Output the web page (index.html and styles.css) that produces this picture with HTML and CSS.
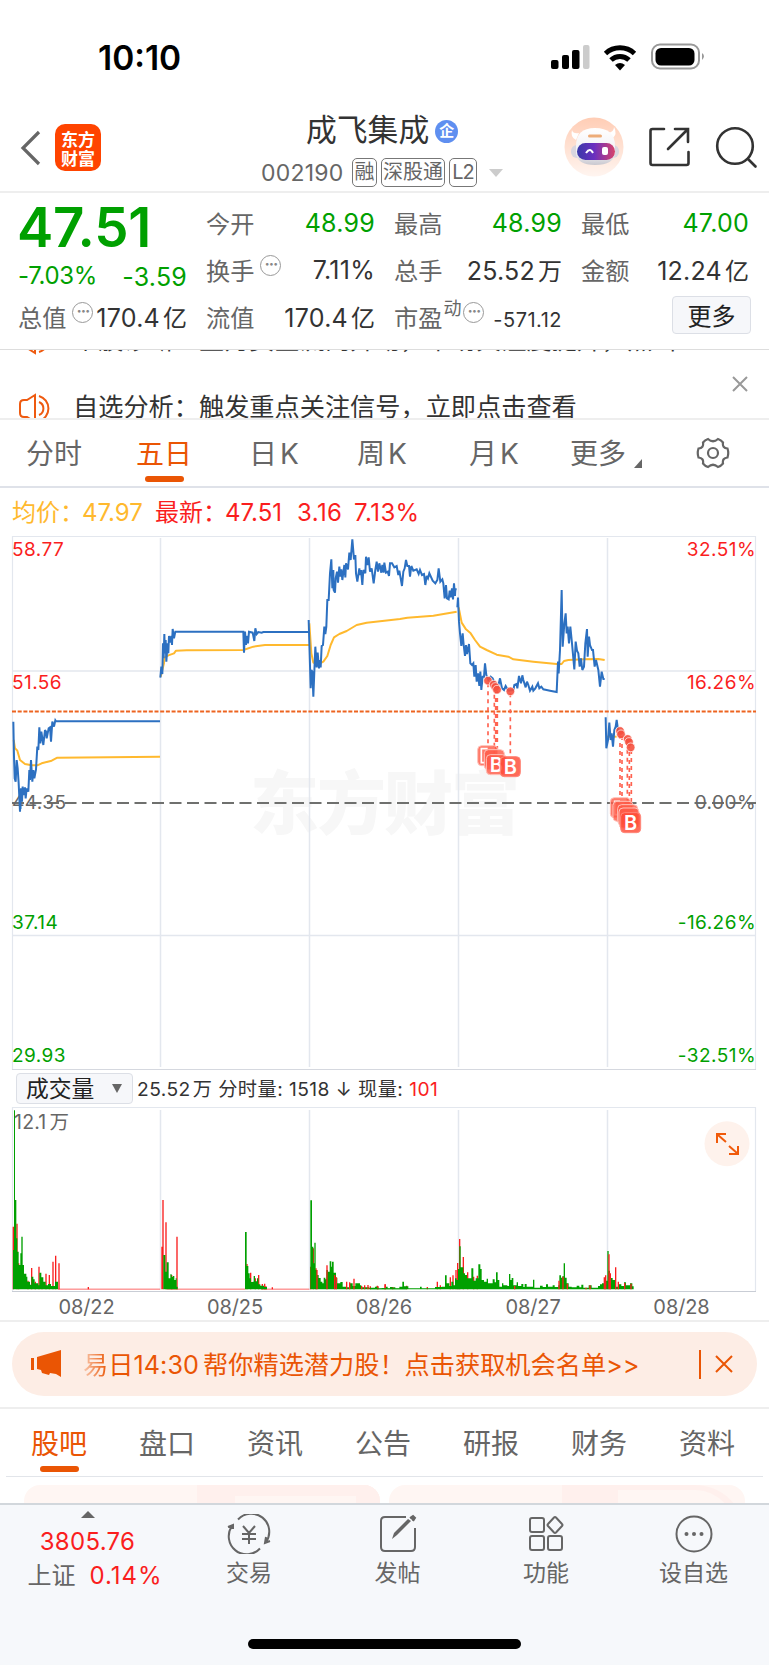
FILE: index.html
```html
<!DOCTYPE html>
<html lang="zh-CN">
<head>
<meta charset="utf-8">
<title>成飞集成 002190</title>
<link rel="stylesheet" href="styles.css">
</head>
<body>
<div class="screen">
  <div class="status">
    <span class="clock">10:10</span>
    <svg class="signals" width="156" height="40" viewBox="0 0 156 40">
      <g fill="#000"><rect x="1" y="23" width="7.5" height="9" rx="2"/><rect x="12" y="18" width="7" height="14" rx="2"/><rect x="22" y="13" width="7.5" height="19" rx="2"/></g>
      <rect x="33" y="8" width="6.5" height="24" rx="2" fill="#ccc"/>
      <g fill="none" stroke="#000" stroke-width="5"><path d="M55.500 16.500a21.500 21.500 0 0 1 29 0"/><path d="M61 23a13 13 0 0 1 18 0"/></g>
      <path d="M65 28a8 8 0 0 1 10 0l-5 5.500z"/>
      <rect x="102" y="7.500" width="47" height="24" rx="8" fill="none" stroke="#999" stroke-width="2"/>
      <rect x="105.500" y="11" width="39" height="17.500" rx="5.500"/>
      <path d="M152 16q4 3 0 7z" fill="#999"/>
    </svg>
  </div>

  <header class="head">
    <svg class="back" width="22" height="36" viewBox="0 0 22 36"><path d="M20 2L4 18L20 34" fill="none" stroke="#666" stroke-width="3.200"/></svg>
    <div class="logo"><span>东方</span><span>财富</span></div>
    <div class="title">
      <div class="name">成飞集成<i class="ent">企</i></div>
      <div class="code"><span class="num">002190</span><b>融</b><b class="wide">深股通</b><b class="l2">L2</b><svg width="14" height="8"><path d="M0 0h14l-7 8z" fill="#ccc"/></svg></div>
    </div>
    <svg class="robot" width="60" height="60" viewBox="0 0 60 60">
      <defs>
        <linearGradient id="halo" x2="0" y2="1"><stop offset="0" stop-color="#ffcdb5"/><stop offset="1" stop-color="#fff5f0"/></linearGradient>
        <linearGradient id="visor"><stop offset="0" stop-color="#3a3aa8"/><stop offset=".45" stop-color="#6a2fc0"/><stop offset="1" stop-color="#d8436a"/></linearGradient>
        <linearGradient id="shell" x2="0" y2="1"><stop offset="0" stop-color="#fff"/><stop offset=".7" stop-color="#f0eff3"/><stop offset="1" stop-color="#c9c8cf"/></linearGradient>
      </defs>
      <circle cx="30" cy="30" r="29.500" fill="url(#halo)"/>
      <path d="M8 13q1 4 7 3l-3 7q-6-3-4-10zM50 10q0 5-6 6l4 6q6-5 2-12z" fill="#fff"/>
      <rect x="7" y="28" width="48" height="13" rx="6" fill="#d8d6df"/>
      <path d="M12 29Q12 11 31 11Q51 11 51 29V36Q50 48 31 48Q13 48 12 36Z" fill="url(#shell)"/>
      <rect x="13" y="26" width="38" height="17" rx="8.500" fill="url(#visor)"/>
      <path d="M22 36q4-6 7 0" fill="none" stroke="#fff" stroke-width="2"/><rect x="38" y="30" width="6" height="8" rx="2" fill="#fff"/>
      <rect x="24" y="17.500" width="14" height="3" rx="1.500" fill="#edac78"/>
    </svg>
    <svg class="share" width="42" height="42" viewBox="0 0 42 42" fill="none" stroke="#333" stroke-width="2.600" stroke-linecap="round"><path d="M16 3H4.500q-2 0-2 2v32q0 2 2 2h34q2 0 2-2V26M27 3h13v13M39.500 3.500L20 23"/></svg>
    <svg class="search" width="44" height="44" viewBox="0 0 44 44" fill="none" stroke="#333" stroke-width="2.600" stroke-linecap="round"><circle cx="20" cy="20" r="17.800"/><path d="M33 33l7.500 7.500"/></svg>
  </header>

  <section class="quote">
    <div class="main">
      <div class="price">47.51</div>
      <div class="change"><span>-7.03%</span><span class="diff">-3.59</span></div>
      <div class="cell"><span class="lab">总值</span><i class="tip">···</i><span class="val">170.4<em>亿</em></span></div>
    </div>
    <div class="grid">
      <div class="cell"><span class="lab">今开</span><span class="val green">48.99</span></div>
      <div class="cell"><span class="lab">最高</span><span class="val green">48.99</span></div>
      <div class="cell"><span class="lab">最低</span><span class="val green">47.00</span></div>
      <div class="cell"><span class="lab">换手</span><i class="tip">···</i><span class="val">7.11%</span></div>
      <div class="cell"><span class="lab">总手</span><span class="val">25.52<em>万</em></span></div>
      <div class="cell"><span class="lab">金额</span><span class="val">12.24<em>亿</em></span></div>
      <div class="cell"><span class="lab">流值</span><span class="val">170.4<em>亿</em></span></div>
      <div class="cell"><span class="lab">市盈</span><sup>动</sup><i class="tip near">···</i><span class="val small">-571.12</span></div>
      <div class="cell"><button class="more">更多</button></div>
    </div>
  </section>

  <section class="ticker">
    <div class="lines">
      <div class="line gone"><svg class="horn" width="36" height="32" viewBox="0 0 36 32"><use href="#horn"/></svg><span>个股诊断：主力资金流向异动，市场关注度提升，点击</span></div>
      <div class="line"><svg class="horn" width="36" height="32" viewBox="0 0 36 32"><g id="horn" fill="none" stroke="#ee5a10" stroke-width="2"><path d="M16 2L8 7H5Q1 7 1 11v9q0 4 4 4h3l8 5zM20 9a7 7 0 0 1 0 13M20 3a13 13 0 0 1 0 25"/></g></svg><span>自选分析：触发重点关注信号，立即点击查看</span></div>
    </div>
    <svg class="close" width="16" height="16"><path d="M1 1l14 14M15 1L1 15" stroke="#999" stroke-width="2"/></svg>
  </section>

  <nav class="periods">
    <span>分时</span><span class="on">五日</span><span>日<u>K</u></span><span>周<u>K</u></span><span>月<u>K</u></span><span class="drop">更多<svg width="8" height="9"><path d="M8 0v9H0z" fill="#666"/></svg></span>
    <svg class="gear" width="34" height="32" viewBox="-17 -16 34 32" fill="none" stroke="#666" stroke-width="2.200"><path d="M-5-14Q0-9.500 5-14Q8-13 10-10.500Q9-5 14.500-4.500Q16 0 14.500 4.500Q9 5 10 10.500Q8 13 5 14Q0 9.500-5 14Q-8 13-10 10.500Q-9 5-14.500 4.500Q-16 0-14.500-4.500Q-9-5-10-10.500Q-8-13-5-14Z"/><circle r="5"/></svg>
  </nav>

  <div class="legend"><span class="avg">均价：<b>47.97</b></span><span>最新：<b>47.51</b></span><b>3.16</b><b>7.13%</b></div>

  <svg class="chart" width="769" height="540" viewBox="0 532 769 540">
    <text x="250" y="829" class="mark" textLength="270">东方财富</text>
    <path class="rule" d="M160.500 538V1067M309.500 538V1067M458.500 538V1067M607.500 538V1067M12 671H756M12 935.500H756"/>
    <path class="rule frame" d="M12.500 536.500H755.500V1069.500H12.500Z"/>
    <path d="M12 1069.500H756" stroke="#d5d8df" fill="none"/>
    <path d="M12 803H756" stroke="#6f706e" stroke-width="2" stroke-dasharray="12 5.500" fill="none"/>
    <g class="axis red"><text x="12" y="555.500">58.77</text><text x="12" y="689">51.56</text><text x="756" y="555.500" class="end">32.51%</text><text x="756" y="689" class="end">16.26%</text></g>
    <g class="axis gray"><text x="12" y="809">44.35</text><text x="756" y="809" class="end">0.00%</text></g>
    <g class="axis grn"><text x="12" y="929">37.14</text><text x="12" y="1062">29.93</text><text x="756" y="929" class="end">-16.26%</text><text x="756" y="1062" class="end">-32.51%</text></g>
    <path d="M12 711.500H756" stroke="#ed6420" stroke-width="2" stroke-dasharray="4 1.700" fill="none"/>
    <g transform="translate(0 530) scale(.33333)">
      <polyline class="mean" points="41,630 45,655 52,662 60,690 75,702 95,706 112,706 125,700 155,692 172,683 480,680"/>
      <polyline class="mean" points="482,440 492,400 493,383 505,376 522,370 528,362 560,361 730,360 760,350 795,345 927,345"/>
      <polyline class="px" points="40,575 42,680 44,745 47,755 50,690 53,715 56,760 60,845 63,775 66,815 68,770 71,795 75,772 77,805 80,775 85,785 88,720 90,750 93,690 97,755 100,720 103,745 108,718 112,650 115,660 118,592 121,640 124,605 130,645 135,600 138,605 140,625 146,595 150,592 153,635 157,575 162,590 166,571 168,574 480,574"/>
      <polyline class="px" points="481,443 484,410 487,432 489,340 491,385 493,312 495,370 497,330 499,395 503,340 505,370 507,318 511,338 514,318 516,345 518,297 522,325 526,305 730,305 732,368 735,305 738,345 740,318 744,340 747,305 758,308 763,333 766,295 770,312 775,306 785,308 790,306 927,306"/>
    </g>
    <g transform="translate(300 530) scale(.33333)">
      <polyline class="mean" points="28,280 34,370 40,398 60,400 70,395 82,378 92,345 102,322 118,312 140,303 170,285 200,278 300,267 322,263 400,257 470,245"/>
      <polyline class="mean" points="476,232 485,278 498,298 512,310 525,330 540,350 560,360 590,374 625,380 640,388 700,395 770,402 785,402 792,393 805,390 850,388 895,387 914,390"/>
      <polyline class="px" points="26,270 32,475 34,420 37,425 40,500 46,350 50,412 53,368 57,415 60,390 62,412 65,348 69,345 73,290 76,312 79,290 82,210 86,210 90,130 94,88 97,175 100,120 101,180 105,188 107,145 111,125 114,158 118,110 121,140 124,118 127,150 133,105 136,142 138,100 144,118 148,68 152,90 157,28 162,88 166,75 168,130 172,155 178,115 180,135 183,120 187,165 190,120 196,130 198,80 202,105 206,82 210,125 215,115 221,160 226,120 230,95 234,125 238,100 244,128 247,105 251,128 253,98 258,128 263,125 267,138 270,100 276,100 283,112 290,108 295,135 298,122 306,168 310,125 314,115 318,90 322,108 327,108 330,140 334,108 340,122 350,118 356,132 360,120 366,135 372,132 376,165 380,138 384,145 388,130 398,152 406,160 412,150 416,115 421,155 427,148 430,160 434,205 438,165 441,205 446,208 449,182 452,202 456,175 459,208 462,160 465,198 466,178 470,178"/>
      <polyline class="px" points="472,232 474,203 477,275 480,310 484,348 488,310 491,345 495,378 498,345 501,372 507,342 511,400 516,405 520,400 523,440 527,405 530,455 534,430 538,468 541,425 544,480 548,440 552,440 555,400 559,435 565,450 572,440 578,445 585,462 592,480 600,445 606,475 612,480 617,468 625,482 640,480 643,465 650,462 652,475 657,438 663,460 667,436 670,450 677,472 681,455 685,465 690,482 697,470 700,482 706,475 714,460 718,475 724,470 730,478 750,482 770,486 774,395 776,430 780,360 785,180 788,350 793,280 797,250 800,310 803,290 807,340 811,290 816,340 823,418 827,335 831,362 835,370 839,410 843,385 847,420 852,410 856,340 861,297 863,380 867,320 870,345 876,360 879,360 884,410 888,390 895,420 900,470 905,425 910,447 914,447"/>
    </g>
    <g transform="translate(460 640) scale(.33333)">
      <path class="mean" d="M440 290H470"/>
      <polyline class="px" points="437,232 439,325 444,300 448,248 452,300 455,280 459,320 463,270 467,260 470,240 474,270 478,272"/>
      <path d="M84 130V320M103 140V340M107 150V345M112 150V350M151 160V350M480 285V470M486 288V475M502 305V490M508 312V500M514 330V515" stroke="#ff6250" stroke-width="5" stroke-dasharray="12 12" fill="none"/>
      <g class="dots"><circle cx="84" cy="122" r="13"/><circle cx="101" cy="134" r="13"/><circle cx="106" cy="141" r="13"/><circle cx="111" cy="149" r="13"/><circle cx="151" cy="154" r="13"/><circle cx="480" cy="273" r="13"/><circle cx="483" cy="283" r="13"/><circle cx="503" cy="297" r="13"/><circle cx="507" cy="306" r="13"/><circle cx="512" cy="322" r="13"/></g>
      <g class="buys">
        <rect x="53" y="317" width="60" height="60" rx="12"/><path d="M83 326H64V368H74" fill="none" stroke="#fff" stroke-width="5"/><rect x="73" y="329" width="60" height="60" rx="12"/><rect x="79" y="344" width="60" height="60" rx="12"/><text x="109" y="396">B</text><rect class="front" x="121" y="350" width="60" height="60" rx="12"/><text x="151" y="402">B</text>
        <rect x="451" y="473" width="60" height="60" rx="12"/><path d="M480 484H464V524H472" fill="none" stroke="#fff" stroke-width="5"/><rect x="459" y="484" width="60" height="60" rx="12"/><rect x="473" y="494" width="60" height="60" rx="12"/><rect x="477" y="504" width="60" height="60" rx="12"/><rect class="front" x="482" y="518" width="60" height="60" rx="12"/><text x="512" y="570">B</text>
      </g>
    </g>
  </svg>

  <div class="volbar"><button>成交量<svg width="10" height="9"><path d="M0 0h10L5 9z" fill="#666"/></svg></button><span class="voltext">25.52<em class="unit">万</em> <em>分时量</em>: 1518 ↓ <em>现量</em>: <b>101</b></span></div>

  <svg class="volume" width="769" height="215" viewBox="0 1105 769 215">
    <path class="rule" d="M160.500 1110V1290M309.500 1110V1290M458.500 1110V1290M607.500 1110V1290"/>
    <path class="rule frame" d="M12.500 1291.500V1107.500H755.500V1291"/>
    <path d="M12 1291.500H756" stroke="#c9cdd5" fill="none"/>
    <text x="14" y="1129" class="top">12.1<tspan dx="3">万</tspan></text>
    <g transform="translate(0 1050) scale(.33333)" fill="none" stroke-width="4">
      <path class="up" d="M40 718V530M51 718V521M56 718V640M84 718V692M95 718V654M106 718V695M117 718V650M126 718V690M138 718V671M148 718V675M159 718V635M167 718V617M177 718V640M265 718V711"/>
      <path class="bars" d="M39 718V600H42V181H45V450H49V565H52V605H56V645H61V610H64V560H68V645H72V671H79V680H82V695H90V704H94V680H100V688H104V700H115V706H118V668H124V682H130V695H137V706H144V702H153V708H165V695H174V718Z"/>
      <path class="up" stroke-width="2" d="M174 717.500H480M500 717.500H736M783 717.500H928"/>
      <path class="up" d="M486 718V590M489 718V450M498 718V517M531 718V560M515 718V675"/>
      <path class="bars" d="M490 718V615H496V665H500V637H506V685H511V673H515V680H519V678H523V690H527V685H530V710H533V718Z"/>
      <path class="up" d="M741 718V642M752 718V668M766 718V685M776 718V675M787 718V702M794 718V701M798 718V709M817 718V712M932 718V650M940 718V595M948 718V655"/>
      <path class="bars" d="M735 718V546H740V648H745V670H749V685H753V696H758V695H761V678H765V694H771V685H775V703H781V707H792V711H801V718ZM931 718V451H936V590H940V640H943V578H947V660H951V675H956V684H962V695H967V700H971V683H976V688H979V660H984V665H989V634H994V650H996V635H1001V668H1008V683H1012V700H1021V696H1028V710H1040V712H1050V700H1058V708H1066V700H1080V706H1084V712H1108V714H1125V710H1135V716H1145V714H1155V710H1163V716H1178V712H1186V716H1220V718Z"/>
      <path class="up" d="M951 718V660M981 718V646M1004 718V675M1009 718V682M1040 718V695M1049 718V697M1062 718V686M1085 718V708M1094 718V706M1104 718V705M1111 718V709M1134 718V709M1156 718V703"/>
    </g>
    <g transform="translate(370 1050) scale(.33333)" fill="none" stroke-width="4">
      <path class="up" d="M22 718V707M45 718V703M68 718V711M110 718V707M172 718V711M202 718V695M211 718V706M241 718V682M249 718V676M258 718V660M263 718V639M269 718V567M280 718V621M293 718V667M311 718V680M322 718V677"/>
      <path class="bars" d="M0 718V713H18V710H22V715H60V711H68V715H88V710H97V695H102V709H115V715H150V710H155V715H195V711H215V710H225V676H230V700H238V708H244V695H250V706H255V685H260V690H264V657H268V589H272V652H280V670H285V675H291V685H304V655H310V692H317V685H325V643H331V657H335V690H342V695H350V686H354V700H368V688H374V697H378V667H383V690H388V710H396V700H400V706H412V708H417V672H421V690H425V684H430V706H440V697H444V708H454V702H460V711H464V702H470V710H489V689H493V713H510V707H518V711H528V703H534V710H548V706H554V711H565V706H568V676H573V683H577V679H581V640H585V683H590V700H596V710H605V712H620V707H628V712H634V704H640V713H656V706H665V713H684V708H690V703H696V700H704V692H712V603H716V662H720V684H728V690H736V710H746V703H754V708H762V697H768V706H780V700H787V709H791V718Z"/>
      <path class="up" d="M434 718V708M567 718V692M579 718V680M592 718V701M648 718V713M660 718V706M703 718V682M707 718V676M717 718V613M721 718V670M737 718V652M745 718V695M764 718V699M783 718V701"/>
    </g>
    <circle cx="727" cy="1143.700" r="22.500" fill="#fef2ec"/>
    <path d="M717 1143V1134H726M718 1135L726 1142M738 1146V1154H729M737 1153L729 1146" fill="none" stroke="#f05a0a" stroke-width="2"/>
    <g class="dates"><text x="86.500" y="1313.500">08/22</text><text x="235" y="1313.500">08/25</text><text x="384" y="1313.500">08/26</text><text x="533" y="1313.500">08/27</text><text x="681.500" y="1313.500">08/28</text></g>
  </svg>

  <section class="promo">
    <div class="pill">
      <svg width="32" height="28" viewBox="0 0 32 28" fill="#ea5504"><path d="M0 8h3v12H0zM6 7L30 0v27l-5-3-6-1-1 2-7-2-1-3-4-1z"/></svg>
      <span class="msg"><em>易</em>日<b>14:30</b>帮你精选潜力股！点击获取机会名单<b>&gt;&gt;</b></span>
      <i class="bar"></i>
      <svg width="18" height="18"><path d="M1 1l16 16M17 1L1 17" stroke="#ea5504" stroke-width="2"/></svg>
    </div>
  </section>

  <nav class="sections"><span class="on">股吧</span><span>盘口</span><span>资讯</span><span>公告</span><span>研报</span><span>财务</span><span>资料</span></nav>
  <div class="cards"><div><i></i><i class="b"></i></div><div><i></i><i class="b round"></i></div></div>

  <footer class="dock">
    <div class="index"><svg width="14" height="7"><path d="M7 0l7 7H0z" fill="#666"/></svg><b>3805.76</b><span>上证<b>0.14%</b></span></div>
    <div class="item"><svg width="44" height="40" viewBox="-22 -20 44 40" fill="none" stroke="#666" stroke-width="2"><path d="M-11-14.500A18 18 0 0 1 17 8M11 14.500A18 18 0 0 1-17-8M-21-7l5-2 0 4M21 7l-5 2 1-6M-6-8L0-1L6-8M0-1V10M-7 0H7M-7 5H7"/></svg>交易</div>
    <div class="item"><svg width="44" height="40" viewBox="-22 -20 44 40" fill="none" stroke="#666" stroke-width="2"><path d="M8-17H-13q-4 0-4 4v26q0 4 4 4h26q4 0 4-4V-6"/><path d="M-6 5l2-6L10-15l3 2L-1 1z" fill="#666" stroke="none"/><path d="M12-16l3-2 2 2-2 3" fill="#666"/></svg>发帖</div>
    <div class="item"><svg width="44" height="40" viewBox="-22 -20 44 40" fill="none" stroke="#666" stroke-width="2"><rect x="-16" y="-16" width="14" height="14" rx="2"/><rect x="-16" y="2" width="14" height="14" rx="2"/><rect x="2" y="2" width="14" height="14" rx="2"/><path d="M8-16.500q1-1 2 0l6 6.500q1 1 0 2l-6 6.500q-1 1-2 0L2-8q-1-1 0-2z"/></svg>功能</div>
    <div class="item"><svg width="44" height="40" viewBox="-22 -20 44 40" fill="none" stroke="#666" stroke-width="2"><circle r="17.500"/><g fill="#666" stroke="none"><circle cx="-7.500" r="2"/><circle r="2"/><circle cx="7.500" r="2"/></g></svg>设自选</div>
    <div class="homebar"></div>
  </footer>
</div>
</body>
</html>
```
FILE: styles.css
```css
* { box-sizing: border-box; }
body { margin: 0; background: #fff; font-family: Inter, "Noto Sans CJK SC", sans-serif; color: #333; }
i, em { font-style: normal; }
b { font-weight: 400; }
u { text-decoration: none; }
svg { display: block; flex: none; }
.screen { width: 769px; height: 1665px; overflow: hidden; display: flex; flex-direction: column; }
.screen > * { flex: none; }

.status { height: 100px; padding: 38px 63px 0 98px; display: flex; justify-content: space-between; }
.clock { font-size: 33.500px; line-height: 40px; font-weight: 600; color: #000; letter-spacing: 0; }
.signals { margin-top: -1px; }

.head { height: 93px; border-bottom: 2px solid #eee; display: flex; padding-left: 19px; }
.back { margin-top: 30px; }
.logo { width: 46px; height: 47px; margin: 24px 0 0 14px; border-radius: 10px; background: #ff4400; color: #fff; font: 700 17px/19px "Noto Sans CJK SC", sans-serif; display: flex; flex-direction: column; align-items: center; justify-content: center; }
.title { margin-left: 160px; width: 260px; }
.name { height: 53px; margin-left: 45px; padding-top: 7px; font-size: 30.800px; line-height: 46px; display: flex; align-items: center; }
.ent { width: 23px; height: 23px; border-radius: 50%; background: #5f8ff0; color: #fff; font-size: 15px; font-weight: 700; line-height: 22px; text-align: center; margin: 3px 0 0 6px; }
.code { display: flex; align-items: center; margin-top: 5px; height: 29px; font-size: 23px; color: #666; }
.code .num { width: 91px; letter-spacing: .2px; }
.code b { width: 25px; height: 29px; border: 1.500px solid #777; border-radius: 5px; font-size: 20px; line-height: 26px; text-align: center; margin-right: 4px; display: flex; justify-content: center; }
.code .wide { width: 64px; }
.code .l2 { width: 28px; letter-spacing: -1px; margin-right: 12px; }
.robot { margin: 17px 0 0 43px; }
.share { margin: 26px 0 0 24px; }
.search { margin: 26px 0 0 25px; }

.quote { height: 157px; border-bottom: 1px solid #ddd; display: flex; padding: 6px 20px 0 18px; }
.main { width: 169px; margin-right: 19px; }
.price { font-size: 54.500px; line-height: 56px; height: 57px; font-weight: 600; color: #00a000; letter-spacing: -.2px; margin-left: -1px; }
.change { display: flex; justify-content: space-between; height: 37px; line-height: 40px; font-size: 24px; letter-spacing: -.3px; color: #00a000; }
.diff { font-size: 25px; letter-spacing: .2px; padding-top: 1px; }
.grid { flex: 1; display: grid; grid-template-columns: 169px 168px 168px; column-gap: 19px; grid-auto-rows: 47px; }
.cell { display: flex; align-items: center; height: 47px; font-size: 24.200px; }
.lab { color: #666; margin-top: -1px; }
.val { margin-left: auto; font-size: 25px; letter-spacing: .25px; white-space: nowrap; }
.val em { font-size: 24px; margin-left: 3px; letter-spacing: 0; }
.green { color: #00a000; }
.small { font-size: 20px; padding-top: 6px; letter-spacing: .5px; }
.tip { width: 21px; height: 21px; border: 1.500px solid #999; border-radius: 50%; color: #888; font-size: 16px; line-height: 17px; font-weight: 700; text-align: center; letter-spacing: -1px; margin: 0 -20px 8px 6px; flex: none; }
.tip.near { margin-left: 2px; }
.cell sup { font-size: 18px; color: #666; margin: 0 0 16px 1px; line-height: 20px; }
.more { width: 79px; height: 38px; margin: -3px -2px 0 auto; border: 1.500px solid #dcdfe6; border-radius: 4px; background: #f6f7fa; color: #222; font: 24px/30px "Noto Sans CJK SC", sans-serif; padding: 0; }

.ticker { height: 70px; border-bottom: 2px solid #eee; display: flex; justify-content: space-between; padding: 0 21px 0 19px; }
.lines { height: 68px; overflow: hidden; }
.line { display: flex; height: 36px; font-size: 25.200px; line-height: 36px; white-space: nowrap; }
.line.gone { height: 67px; margin-top: -28px; }
.line span { margin-left: 18px; }
.line .horn { margin-top: 4px; }
.line.gone .horn { margin-top: 2px; }
.close { margin-top: 26px; }

.periods { height: 68px; border-bottom: 2px solid #dfe2e9; display: flex; font-size: 28px; line-height: 68px; color: #666; padding-left: 26px; }
.periods span { width: 110px; white-space: nowrap; position: relative; flex: none; }
.periods span:nth-child(3) { margin-left: 3px; width: 108px; }
.periods span:nth-child(4) { width: 112px; }
.periods span:nth-child(5) { width: 101px; }
.periods u { margin-left: 3px; }
.periods .on, .sections .on { color: #ea5504; }
.on::after { content: ""; position: absolute; left: 9px; bottom: 4px; width: 39px; height: 6px; border-radius: 3px; background: #ea5504; }
.periods .drop { display: flex; width: 126px; }
.drop svg { margin: 39px 0 0 8px; }
.gear { margin-top: 17px; }

.legend { height: 44px; display: flex; padding-left: 12px; font-size: 24px; line-height: 49px; color: #fa1e1e; white-space: nowrap; }
.legend span { display: flex; width: 143px; }
.legend span b { margin-left: -2px; }
.legend .avg { color: #ffb92e; }
.legend > b { width: 58px; margin-left: -1px; letter-spacing: .4px; }

.rule { fill: none; stroke: #e3e7ee; stroke-width: 1.500; }
.frame { stroke-width: 1.200; }
.mark { font: 900 69px "Noto Sans CJK SC", sans-serif; fill: #f7f7f7; }
.axis { font-size: 19px; letter-spacing: .45px; }
.end { text-anchor: end; }
.red { fill: #fa1e1e; }
.gray, .top { fill: #666; }
.grn { fill: #00a000; }
.mean { fill: none; stroke: #ffb92e; stroke-width: 6; stroke-linejoin: round; }
.px { fill: none; stroke: #2c70c1; stroke-width: 6; stroke-linejoin: miter; stroke-miterlimit: 3; }
.dots circle { fill: #f5503e; fill-opacity: .9; stroke: #fff; stroke-width: 2; }
.buys rect { fill: #ff5c48; fill-opacity: .82; stroke: #ffc3bb; stroke-width: 3; }
.buys .front { stroke: #ff8678; fill: #ff4a36; }
.buys text { font-size: 60px; font-weight: 600; fill: #fff; text-anchor: middle; }

.volbar { height: 33px; display: flex; padding: 1px 0 0 16px; align-items: flex-start; }
.volbar button { width: 117px; height: 31px; border: 1px solid #dcdfe6; border-radius: 4px; background: #f6f7fa; color: #222; font: 22.800px/25px "Noto Sans CJK SC", sans-serif; padding: 0 10px 3px 9px; display: flex; justify-content: space-between; align-items: center; }
.volbar button svg { margin-top: 3px; }
.voltext { margin-left: 4px; font-size: 19.200px; line-height: 33px; letter-spacing: .45px; white-space: nowrap; }
.unit { margin-left: 2px; }
.voltext b { color: #fa1e1e; }
.top { font-size: 19.500px; letter-spacing: .2px; }
.up { stroke: #fa1e1e; }
.bars { fill: #00a000; }
.dates { font-size: 20px; fill: #666; text-anchor: middle; letter-spacing: -.1px; }

.promo { height: 89px; border-top: 2px solid #eee; border-bottom: 2px solid #eee; padding: 10px 12px 0; }
.pill { height: 64px; border-radius: 32px; background: #fdede5; display: flex; align-items: center; padding: 0 23px 0 19px; color: #ea5504; }
.msg { width: 595px; margin: -3px 0 0 20px; font-size: 25.200px; white-space: nowrap; }
.msg em { background: linear-gradient(90deg, #f9c9b0, #ea5504); -webkit-background-clip: text; background-clip: text; color: transparent; }
.msg b { margin-right: 4px; letter-spacing: .1px; }
.pill .bar { width: 1.500px; height: 29px; background: #ea5504; margin: 0 14px 0 21px; }

.sections { height: 68px; margin: 0 6px; border-bottom: 1.500px solid #e2e5ea; display: flex; padding-left: 25px; font-size: 28px; line-height: 70px; color: #666; }
.sections span { width: 108px; flex: none; position: relative; }
.cards { height: 26px; padding: 8px 24px 0; display: flex; gap: 9px; overflow: hidden; }
.cards div { width: 356px; height: 60px; border-radius: 16px; background: #fff6f3; display: flex; justify-content: flex-end; overflow: hidden; }
.cards i { width: 38px; background: #fff0ed; }
.cards .b { width: 145px; border: solid #fff0ed; border-width: 11px 24px 0 0; background: #fff6f3; }
.cards .round { border-width: 5px 8px 0 18px; border-radius: 0 50px 0 0; }

.dock { height: 163px; background: #f6f8fb; border-top: 2px solid #d2d7dc; display: grid; grid-template-columns: 175px 148px 149px 148px 147px; position: relative; font-size: 23px; color: #666; }
.index { display: flex; flex-direction: column; align-items: center; padding-top: 6px; font-size: 24px; line-height: 34px; }
.index > b { margin-top: 7px; }
.index b { color: #fa1e1e; letter-spacing: .3px; }
.index span b { margin-left: 14px; letter-spacing: 1px; }
.index span { white-space: nowrap; margin-left: 15px; }
.item { display: flex; flex-direction: column; align-items: center; padding-top: 9px; line-height: 39px; }
.homebar { position: absolute; left: 248px; top: 134px; width: 273px; height: 10px; border-radius: 5px; background: #000; }
```
